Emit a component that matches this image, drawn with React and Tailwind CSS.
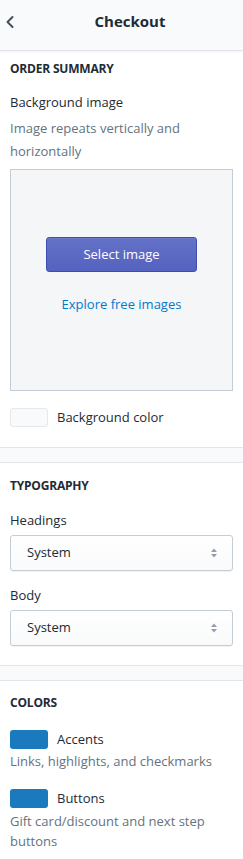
import React from "react";

const font = { fontFamily: '"Open Sans", "Noto Sans", "Liberation Sans", sans-serif' };

function SelectBox({ value }) {
  return (
    <div className="mt-[5px] h-[36px] rounded-[3px] border border-[#c4cdd5] bg-gradient-to-b from-white to-[#f9fafb] shadow-[0_1px_0_rgba(22,29,37,0.05)] flex items-center justify-between pl-[16px] pr-[14px]">
      <span className="text-[13px] text-[#212b36]">{value}</span>
      <svg width="8" height="12" viewBox="0 0 8 12">
        <path d="M4 1.5 L7 5 H1 Z" fill="#919eab" />
        <path d="M4 10.5 L7 7 H1 Z" fill="#919eab" />
      </svg>
    </div>
  );
}

function Separator() {
  return <div className="h-[16px] bg-[#f9fafb] border-t border-b border-[#e3e6e9]" />;
}

export default function App() {
  return (
    <div style={font} className="w-[243px] h-[859px] bg-white overflow-hidden text-[#212b36]">
      {/* Header */}
      <div className="h-[51px] bg-[#f9fafb] border-b border-[#e1e4e8] shadow-[0_1px_2px_rgba(0,0,0,0.06)] flex items-center relative">
        <svg className="absolute left-[5px] top-[15px]" width="10" height="14" viewBox="0 0 10 14">
          <path d="M7.5 2 L2.5 7 L7.5 12" fill="none" stroke="#454f5b" strokeWidth="2" strokeLinecap="round" strokeLinejoin="round" />
        </svg>
        <div className="w-full pl-[17px] text-center text-[15px] font-bold leading-[20px] -mt-[8px]">Checkout</div>
      </div>

      {/* Order summary */}
      <div className="px-[10px] pt-[8px] pb-[20px]">
        <div className="text-[12px] font-bold leading-[20px] tracking-[-0.2px]">ORDER SUMMARY</div>
        <div className="mt-[13px] text-[13px] leading-[20px]">Background image</div>
        <div className="mt-[5px] text-[13px] leading-[23px] text-[#637381]">
          Image repeats vertically and horizontally
        </div>
        <div className="mt-[6px] h-[222px] border border-[#c4cdd5] bg-[#f4f6f8] flex flex-col items-center">
          <div className="mt-[67px] w-[151px] h-[35px] rounded-[3px] border border-[#3f4eae] bg-gradient-to-b from-[#6371c7] to-[#5563c1] shadow-[inset_0_1px_0_0_#6f7bcb] flex items-center justify-center text-white text-[13px]">
            Select image
          </div>
          <div className="mt-[22px] text-[13px] leading-[20px] text-[#007ace]">Explore free images</div>
        </div>
        <div className="mt-[16px] flex items-center gap-[9px]">
          <div className="w-[38px] h-[19px] rounded-[3px] border border-[#e6e8eb] bg-[#f9fafb]" />
          <span className="text-[13px] leading-[20px]">Background color</span>
        </div>
      </div>

      <Separator />

      {/* Typography */}
      <div className="px-[10px] pt-[13px] pb-[19px]">
        <div className="text-[12px] font-bold leading-[20px] tracking-[-0.2px]">TYPOGRAPHY</div>
        <div className="mt-[14px] text-[13px] leading-[20px]">Headings</div>
        <SelectBox value="System" />
        <div className="mt-[14px] text-[13px] leading-[20px]">Body</div>
        <SelectBox value="System" />
      </div>

      <Separator />

      {/* Colors */}
      <div className="px-[10px] pt-[12px]">
        <div className="text-[12px] font-bold leading-[20px] tracking-[-0.2px]">COLORS</div>
        <div className="mt-[16px] flex items-center gap-[9px]">
          <div className="w-[38px] h-[19px] rounded-[3px] bg-[#1b79bd]" />
          <span className="text-[13px] leading-[20px]">Accents</span>
        </div>
        <div className="mt-[1px] text-[13px] leading-[23px] text-[#637381]">Links, highlights, and checkmarks</div>
        <div className="mt-[15px] flex items-center gap-[9px]">
          <div className="w-[38px] h-[19px] rounded-[3px] bg-[#1b79bd]" />
          <span className="text-[13px] leading-[20px]">Buttons</span>
        </div>
        <div className="mt-[3px] text-[13px] leading-[20px] text-[#637381]">
          Gift card/discount and next step buttons
        </div>
      </div>
    </div>
  );
}
